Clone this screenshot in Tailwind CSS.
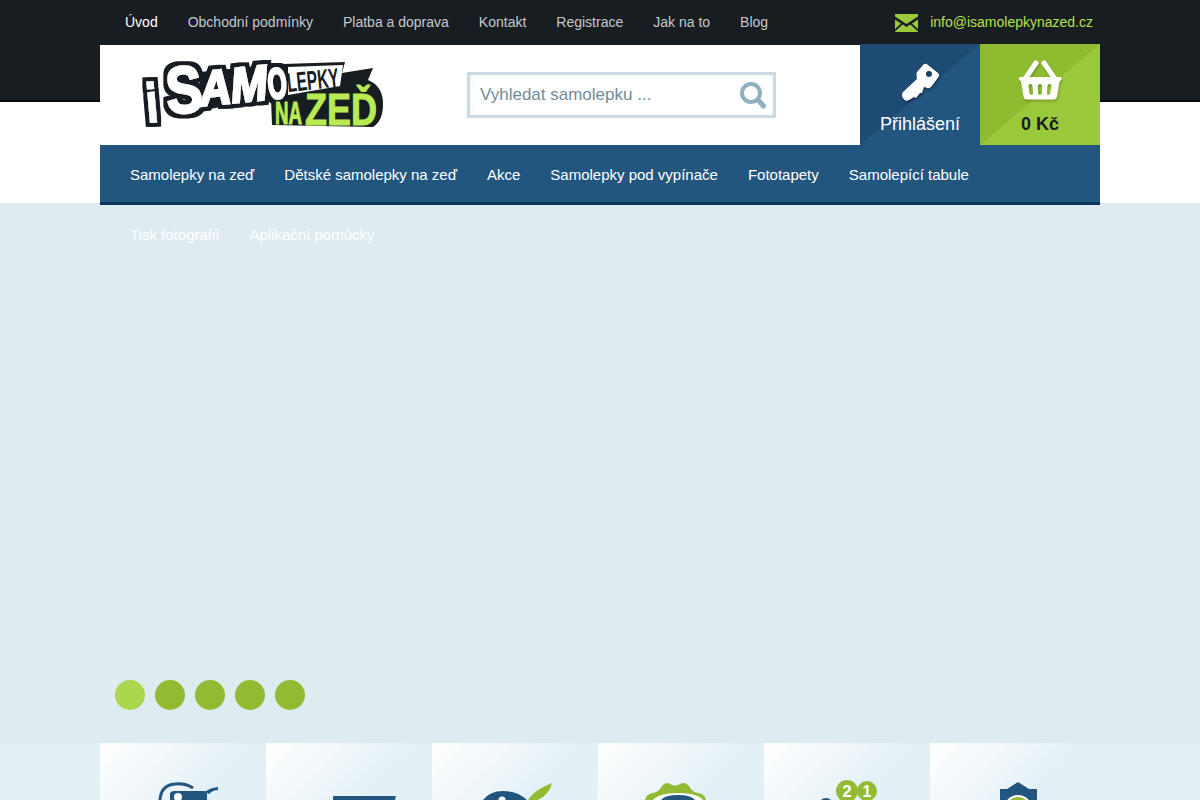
<!DOCTYPE html>
<html lang="cs">
<head>
  <meta charset="UTF-8">
  <title>iSamolepky na zeď</title>
  <script src="https://cdn.jsdelivr.net/npm/@tailwindcss/browser@4"></script>
</head>
<body class="h-screen overflow-hidden bg-[#deebf1] font-['Liberation_Sans',Arial,sans-serif]">
  <!-- dark top bar and white strip behind the header -->
  <div class="bg-[linear-gradient(#181d22_0,#181d22_100px,#08090a_100px,#08090a_102px,#fff_102px,#fff_203px,#deebf1_203px)]">
    <div class="mx-auto w-[1000px]">

      <div class="flex h-[45px] items-center justify-between pb-px text-sm">
        <ul class="flex pl-[10px] text-[#c4c8cb]">
          <li class="px-[15px] text-white">Úvod</li>
          <li class="px-[15px]">Obchodní podmínky</li>
          <li class="px-[15px]">Platba a doprava</li>
          <li class="px-[15px]">Kontakt</li>
          <li class="px-[15px]">Registrace</li>
          <li class="px-[15px]">Jak na to</li>
          <li class="px-[15px]">Blog</li>
        </ul>
        <a class="flex items-center gap-3 pr-[7px] text-[#b4e04e]" href="#">
          <svg class="w-[23px] h-[18px] mt-0.5" viewBox="0 0 23 18"><path fill="#9bc93c" d="M0 0h23v2.500l-11.500 7.500L0 2.500zM0 5.500l6 4L0 15zM23 5.500l-6 4 6 5.500zM0 18v-.500l7.700-7 3.800 2.500 3.800-2.500 7.700 7v.500z"/></svg>
          info@isamolepkynazed.cz
        </a>
      </div>

      <div class="flex h-[100px]">
        <div class="flex flex-1 bg-white">
          <svg class="ml-[43px] mt-[15px] w-[240px] h-[72px] overflow-visible" viewBox="143 60 240 72">
            <defs>
              <filter id="outline" x="-20%" y="-20%" width="140%" height="140%">
                <feMorphology in="SourceAlpha" operator="dilate" radius="3.500" result="fat"/>
                <feFlood flood-color="#181d22"/>
                <feComposite in2="fat" operator="in" result="edge"/>
                <feMerge><feMergeNode in="edge"/><feMergeNode in="SourceGraphic"/></feMerge>
              </filter>
            </defs>
            <path fill="#181d22" d="M200 72l68-7 15-1 62-2-3 11 31-5-5 12q15 6 15 24 0 17-10 23l-101-2-1-27-10 1-61 12z"/>
            <g fill="#fff" stroke="#fff" stroke-width="2.500" font-family="Liberation Sans" font-weight="700" filter="url(#outline)">
              <text x="148" y="122" font-size="54" transform="rotate(-5 148 122)" textLength="11" lengthAdjust="spacingAndGlyphs">i</text>
              <text x="168" y="114" font-size="66" transform="rotate(-5 168 114)" textLength="36" lengthAdjust="spacingAndGlyphs">S</text>
              <text x="201" y="106" font-size="49" font-style="italic" transform="rotate(-6 201 106)" textLength="68" lengthAdjust="spacingAndGlyphs">AM</text>
              <text x="269" y="99" font-size="43" transform="rotate(-5 269 99)" textLength="19" lengthAdjust="spacingAndGlyphs">O</text>
            </g>
            <path fill="#fff" d="M288 67l55-2-3 21-52 9z"/>
            <text x="288" y="92" fill="#181d22" font-family="Liberation Sans" font-weight="700" font-size="27" transform="rotate(-6 288 92)" textLength="52" lengthAdjust="spacingAndGlyphs">LEPKY</text>
            <g fill="#b8ea53" stroke="#b8ea53" stroke-width="1" font-family="Liberation Sans" font-weight="700">
              <text x="275" y="124" font-size="31" textLength="27" lengthAdjust="spacingAndGlyphs">NA</text>
              <text x="305" y="125" font-size="44" textLength="72" lengthAdjust="spacingAndGlyphs">ZEĎ</text>
            </g>
          </svg>

          <div class="ml-[84px] mt-[27px] flex h-[46px] w-[309px] items-center border-[3px] border-[#c9dae2] bg-white shadow-[inset_0_0_5px_rgba(180,205,215,0.25)]">
            <input class="w-full min-w-0 bg-transparent pl-[10px] text-[17px] outline-none placeholder:text-[#718c99]" placeholder="Vyhledat samolepku ...">
            <svg class="mr-[7px] w-[26px] h-[27px] shrink-0" viewBox="0 0 26 27" fill="none" stroke="#8fb0bf"><circle cx="11" cy="11" r="9" stroke-width="4"/><path d="M19 19l4.500 5" stroke-width="5" stroke-linecap="round"/></svg>
          </div>
        </div>

        <a href="#" class="-mt-px flex h-[101px] w-[120px] flex-col items-center bg-[linear-gradient(to_bottom_right,#1e4b74_50%,#22567f_50%)] text-white">
          <svg class="mt-[18px] w-[42px] h-[42px] drop-shadow-[1px_2px_1px_rgba(0,0,0,0.3)]" viewBox="0 0 42 42"><path fill="#fff" fill-rule="evenodd" d="M25 2Q27 1 29 3L39 11Q41 13 39.500 15L32 25Q30 27 27 25.500L25 25L23 31L21 31L17 36L15 35L10 38Q6 40 4 36Q2 33 4 30L18 17Q17 12 18 10zM30 9a3 3 0 1 0 0 6a3 3 0 1 0 0-6z"/></svg>
          <span class="mt-[7px] text-lg leading-[26px]">Přihlášení</span>
        </a>
        <a href="#" class="-mt-px flex h-[101px] w-[120px] flex-col items-center bg-[linear-gradient(to_bottom_right,#8fbb30_50%,#9bc93c_50%)] text-[#181d22]">
          <svg class="mt-[16px] w-[44px] h-[42px] drop-shadow-[1px_2px_1px_rgba(0,0,0,0.2)]" viewBox="0 0 44 42"><g fill="none" stroke="#fff" stroke-width="5" stroke-linecap="round"><path d="M18 3L7 19M26 3l11 16"/></g><path fill="#fff" fill-rule="evenodd" d="M2 17h40q2 0 1.500 2.500l-2 2-2.500 15q-.5 3-3.500 3H9q-3 0-3.500-3L3 21.500l-2-2Q.5 17 2 17zM12.500 24q-2 0-2 2l1 7q.5 2 2 2t1.500-2l-.5-7q0-2-2-2zM22 24q-2 0-2 2v7q0 2 2 2t2-2v-7q0-2-2-2zM31.500 24q-2 0-2 2l-.5 7q0 2 1.500 2t2-2l1-7q0-2-2-2z"/></svg>
          <span class="mt-[9px] text-lg font-bold leading-[26px]">0 Kč</span>
        </a>
      </div>

      <!-- second row of links wraps past the bar, white on the pale page -->
      <ul class="box-border flex h-[60px] flex-wrap border-b-[3px] border-[#0c3560] bg-[#22567f] pl-[15px] text-[15px] text-white">
        <li class="h-[60px] px-[15px] leading-[60px]">Samolepky na zeď</li>
        <li class="h-[60px] px-[15px] leading-[60px]">Dětské samolepky na zeď</li>
        <li class="h-[60px] px-[15px] leading-[60px]">Akce</li>
        <li class="h-[60px] px-[15px] leading-[60px]">Samolepky pod vypínače</li>
        <li class="h-[60px] px-[15px] leading-[60px]">Fototapety</li>
        <li class="h-[60px] px-[15px] leading-[60px]">Samolepící tabule</li>
        <li class="h-[60px] px-[15px] leading-[60px]">Tisk fotografií</li>
        <li class="h-[60px] px-[15px] leading-[60px]">Aplikační pomůcky</li>
      </ul>

      <div class="flex h-[538px] items-end gap-[10px] pb-[33px] pl-[15px]">
        <span class="size-[30px] rounded-full bg-[#abd74e]"></span>
        <span class="size-[30px] rounded-full bg-[#92bb33]"></span>
        <span class="size-[30px] rounded-full bg-[#92bb33]"></span>
        <span class="size-[30px] rounded-full bg-[#92bb33]"></span>
        <span class="size-[30px] rounded-full bg-[#92bb33]"></span>
      </div>
    </div>
  </div>

  <div class="bg-[#e3f0f6]">
    <div class="mx-auto flex w-[1000px]">
      <div class="h-[57px] w-[166px] bg-[linear-gradient(135deg,#fff_0%,#e3f0f6_70%)]">
        <svg class="w-[166px] h-[57px]" viewBox="0 0 166 57"><path fill="none" stroke="#22567f" stroke-width="3" d="M60 57q1-15 15-16 10-1 18 4"/><path fill="#22567f" d="M70 50q1-2 4-2h30q3 0 3 3v6H70z"/><circle cx="78" cy="54" r="4" fill="#fff"/><path fill="#22567f" d="M105 49q4-4 13-5v3q-5 0-9 4z"/></svg>
      </div>
      <div class="h-[57px] w-[166px] bg-[linear-gradient(135deg,#fff_0%,#e3f0f6_70%)]">
        <svg class="w-[166px] h-[57px]" viewBox="0 0 166 57"><path fill="#22567f" d="M67 54q0-1 1-1h62l-1 4H67z"/></svg>
      </div>
      <div class="h-[57px] w-[166px] bg-[linear-gradient(135deg,#fff_0%,#e3f0f6_70%)]">
        <svg class="w-[166px] h-[57px]" viewBox="0 0 166 57"><path fill="#22567f" d="M51 57q7-9 20-9 14 0 24 9z"/><circle cx="70" cy="57" r="3.500" fill="#fff"/><path fill="#92bb33" d="M96 57q6-10 24-17-3 12-14 17z"/></svg>
      </div>
      <div class="h-[57px] w-[166px] bg-[linear-gradient(135deg,#fff_0%,#e3f0f6_70%)]">
        <svg class="w-[166px] h-[57px]" viewBox="0 0 166 57"><path fill="#92bb33" d="M47 57q1-6 8-7 6-1 9-7 4-5 8-2 5 3 10 0 5-3 9 2 3 6 9 7 7 1 8 7z"/><path fill="#fff" d="M55 57q6-7 25-7t25 7z"/><path fill="#22567f" d="M63 57q4-5 17-5t17 5z"/></svg>
      </div>
      <div class="h-[57px] w-[166px] bg-[linear-gradient(135deg,#fff_0%,#e3f0f6_70%)]">
        <svg class="w-[166px] h-[57px]" viewBox="0 0 166 57"><path fill="#22567f" d="M57 57q2-2 5-2t5 2z"/><circle cx="83" cy="48" r="11" fill="#92bb33"/><circle cx="103" cy="48" r="10" fill="#92bb33"/><text x="83" y="54" fill="#fff" font-size="17" font-weight="700" text-anchor="middle" font-family="Liberation Sans">2</text><text x="103" y="54" fill="#fff" font-size="16" font-weight="700" text-anchor="middle" font-family="Liberation Sans">1</text></svg>
      </div>
      <div class="h-[57px] w-[166px] bg-[linear-gradient(135deg,#fff_0%,#e3f0f6_70%)]">
        <svg class="w-[166px] h-[57px]" viewBox="0 0 166 57"><path fill="#22567f" d="M70 46h7l11-7 11 7h8v11H70z"/><circle cx="88" cy="66" r="14" fill="#fff"/><circle cx="88" cy="66" r="12" fill="#92bb33"/></svg>
      </div>
    </div>
  </div>
</body>
</html>
